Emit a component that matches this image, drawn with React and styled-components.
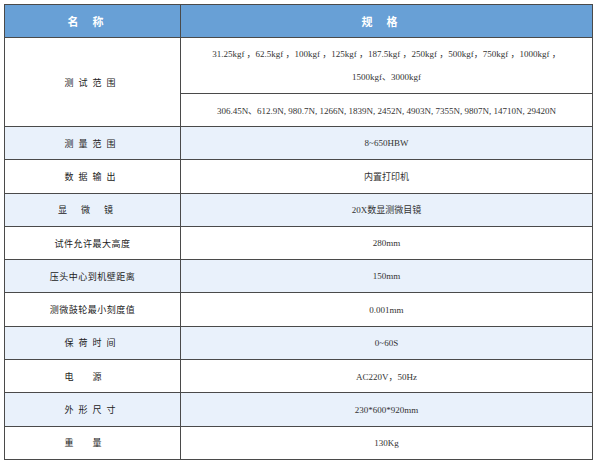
import React from "react";
import styled, { createGlobalStyle } from "styled-components";

const GlobalStyle = createGlobalStyle`
  html, body {
    margin: 0;
    padding: 0;
    background: #fff;
  }
  body {
    font-family: "Liberation Serif", "Noto Sans CJK SC", serif;
  }
`;

const specs = [
  { name: "测量范围", spread: 5, value: "8~650HBW" },
  { name: "数据输出", spread: 5, value: "内置打印机" },
  { name: "显微镜", spread: 14, value: "20X数显测微目镜" },
  { name: "试件允许最大高度", spread: 0.5, value: "280mm" },
  { name: "压头中心到机壁距离", spread: 0.5, value: "150mm" },
  { name: "测微鼓轮最小刻度值", spread: 0.5, value: "0.001mm" },
  { name: "保荷时间", spread: 5, value: "0~60S" },
  { name: "电源", spread: 19, value: "AC220V，50Hz" },
  { name: "外形尺寸", spread: 5, value: "230*600*920mm" },
  { name: "重量", spread: 19, value: "130Kg" },
];

function App() {
  return (
    <>
      <GlobalStyle />
      <Page>
        <Table>
          <colgroup>
            <NameCol />
            <col />
          </colgroup>
          <thead>
            <tr>
              <HeadCell $spread={14}>名称</HeadCell>
              <HeadCell $spread={14}>规格</HeadCell>
            </tr>
          </thead>
          <tbody>
            <Row>
              <NameCell rowSpan={2} $spread={5}>
                测试范围
              </NameCell>
              <ValueCell $tall>
                <Line>
                  31.25kgf ，62.5kgf ，100kgf ，125kgf ，187.5kgf ，250kgf
                  ，500kgf，750kgf ，1000kgf ，
                </Line>
                <Line>1500kgf、3000kgf</Line>
              </ValueCell>
            </Row>
            <Row>
              <ValueCell>
                306.45N、612.9N, 980.7N, 1266N, 1839N, 2452N, 4903N, 7355N,
                9807N, 14710N, 29420N
              </ValueCell>
            </Row>
            {specs.map((s, i) => (
              <Row key={s.name} $shaded={i % 2 === 0}>
                <NameCell $spread={s.spread}>{s.name}</NameCell>
                <ValueCell>{s.value}</ValueCell>
              </Row>
            ))}
          </tbody>
        </Table>
      </Page>
    </>
  );
}

const Page = styled.div`
  padding: 4px;
  width: 600px;
  box-sizing: border-box;
`;

const Table = styled.table`
  width: 589px;
  border-collapse: collapse;
  table-layout: fixed;
  font-size: 9px;
  color: #333;
`;

const NameCol = styled.col`
  width: 176px;
`;

const HeadCell = styled.th`
  height: 32px;
  padding: 0;
  background: #68a0d6;
  color: #fff;
  font-family: "Noto Sans CJK SC", sans-serif;
  font-size: 11px;
  font-weight: bold;
  letter-spacing: ${(p) => p.$spread}px;
  border: 1px solid #4a4a4a;
  text-align: center;
`;

const Row = styled.tr`
  background: ${(p) => (p.$shaded ? "#e9f1fb" : "#fff")};
`;

const NameCell = styled.td`
  height: 32.3px;
  padding: 0;
  border: 1px solid #4a4a4a;
  text-align: center;
  color: #222;
  font-family: "Noto Sans CJK SC", sans-serif;
  letter-spacing: ${(p) => p.$spread}px;
`;

const ValueCell = styled.td`
  height: ${(p) => (p.$tall ? "55px" : "32px")};
  padding: 0;
  border: 1px solid #4a4a4a;
  text-align: center;
  white-space: nowrap;
`;

const Line = styled.div`
  line-height: 23px;
`;

export default App;
